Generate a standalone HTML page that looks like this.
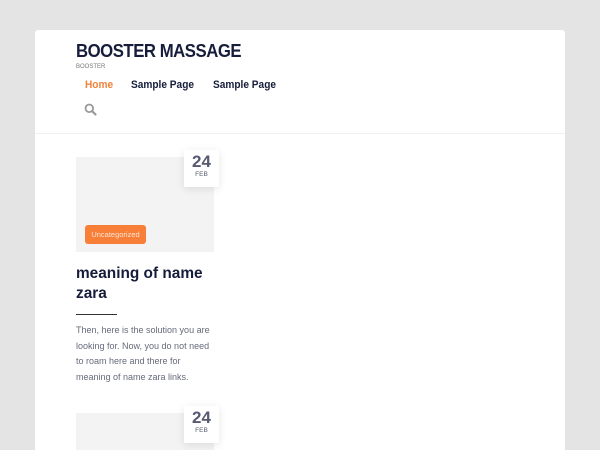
<!DOCTYPE html>
<html><head><meta charset="utf-8"><style>
*{margin:0;padding:0;box-sizing:border-box}
html,body{width:600px;height:450px;overflow:hidden;background:#e4e4e4;font-family:"Liberation Sans",Arial,sans-serif;position:relative}
.wrap{position:absolute;left:35px;top:30px;width:530px;height:420px;background:#fff;border-radius:3px 3px 0 0;overflow:hidden}
.title{position:absolute;left:41px;top:11px;font-size:18px;font-weight:bold;color:#161d3b;letter-spacing:-0.5px;transform:scaleX(0.93);transform-origin:left}
.tag{position:absolute;left:41px;top:34px;font-size:6px;color:#777}
.nav{position:absolute;top:49px;font-size:11px;font-weight:bold;color:#161d3b;transform:scaleX(0.92);transform-origin:left}
.hr{position:absolute;left:0;top:103px;width:530px;height:1px;background:#f0f0f0}
.img{position:absolute;left:41px;width:138px;height:95px;background:#f3f3f3}
.date{position:absolute;left:149px;width:35px;height:37px;background:#fff;box-shadow:0 2px 8px rgba(0,0,0,.1);text-align:center;color:#555a70}
.date b{display:block;font-size:17px;margin-top:3px;line-height:18px}
.date span{display:block;font-size:6.5px}
.cat{position:absolute;left:50px;top:195px;width:61px;height:19px;background:#f87f37;border-radius:3px;font-size:7.5px;line-height:19px;text-align:center;color:#fde6d6}
.h{position:absolute;left:41px;top:234px;font-size:15.4px;font-weight:bold;color:#161d3b;line-height:20px;width:140px}
.line{position:absolute;left:41px;top:284px;width:41px;height:1px;background:#333}
.p{position:absolute;left:41px;top:293px;font-size:9px;line-height:15.5px;color:#666a7a;width:140px}
</style></head><body>
<div class="wrap">
<div class="title">BOOSTER MASSAGE</div>
<div class="tag">BOOSTER</div>
<div class="nav" style="left:50px;color:#f0823a">Home</div>
<div class="nav" style="left:96px">Sample Page</div>
<div class="nav" style="left:178px">Sample Page</div>
<svg style="position:absolute;left:49px;top:73px" width="13" height="13" viewBox="0 0 13 13"><circle cx="5.3" cy="5.3" r="3.8" fill="none" stroke="#999" stroke-width="1.8"/><line x1="8" y1="8" x2="11.5" y2="11.5" stroke="#999" stroke-width="2.2" stroke-linecap="round"/></svg>
<div class="hr"></div>
<div class="img" style="top:127px"></div>
<div class="date" style="top:120px"><b>24</b><span>FEB</span></div>
<div class="cat">Uncategorized</div>
<div class="h">meaning of name zara</div>
<div class="line"></div>
<div class="p">Then, here is the solution you are looking for. Now, you do not need to roam here and there for meaning of name zara links.</div>
<div class="img" style="top:383px"></div>
<div class="date" style="top:376px"><b>24</b><span>FEB</span></div>
</div>
</body></html>
